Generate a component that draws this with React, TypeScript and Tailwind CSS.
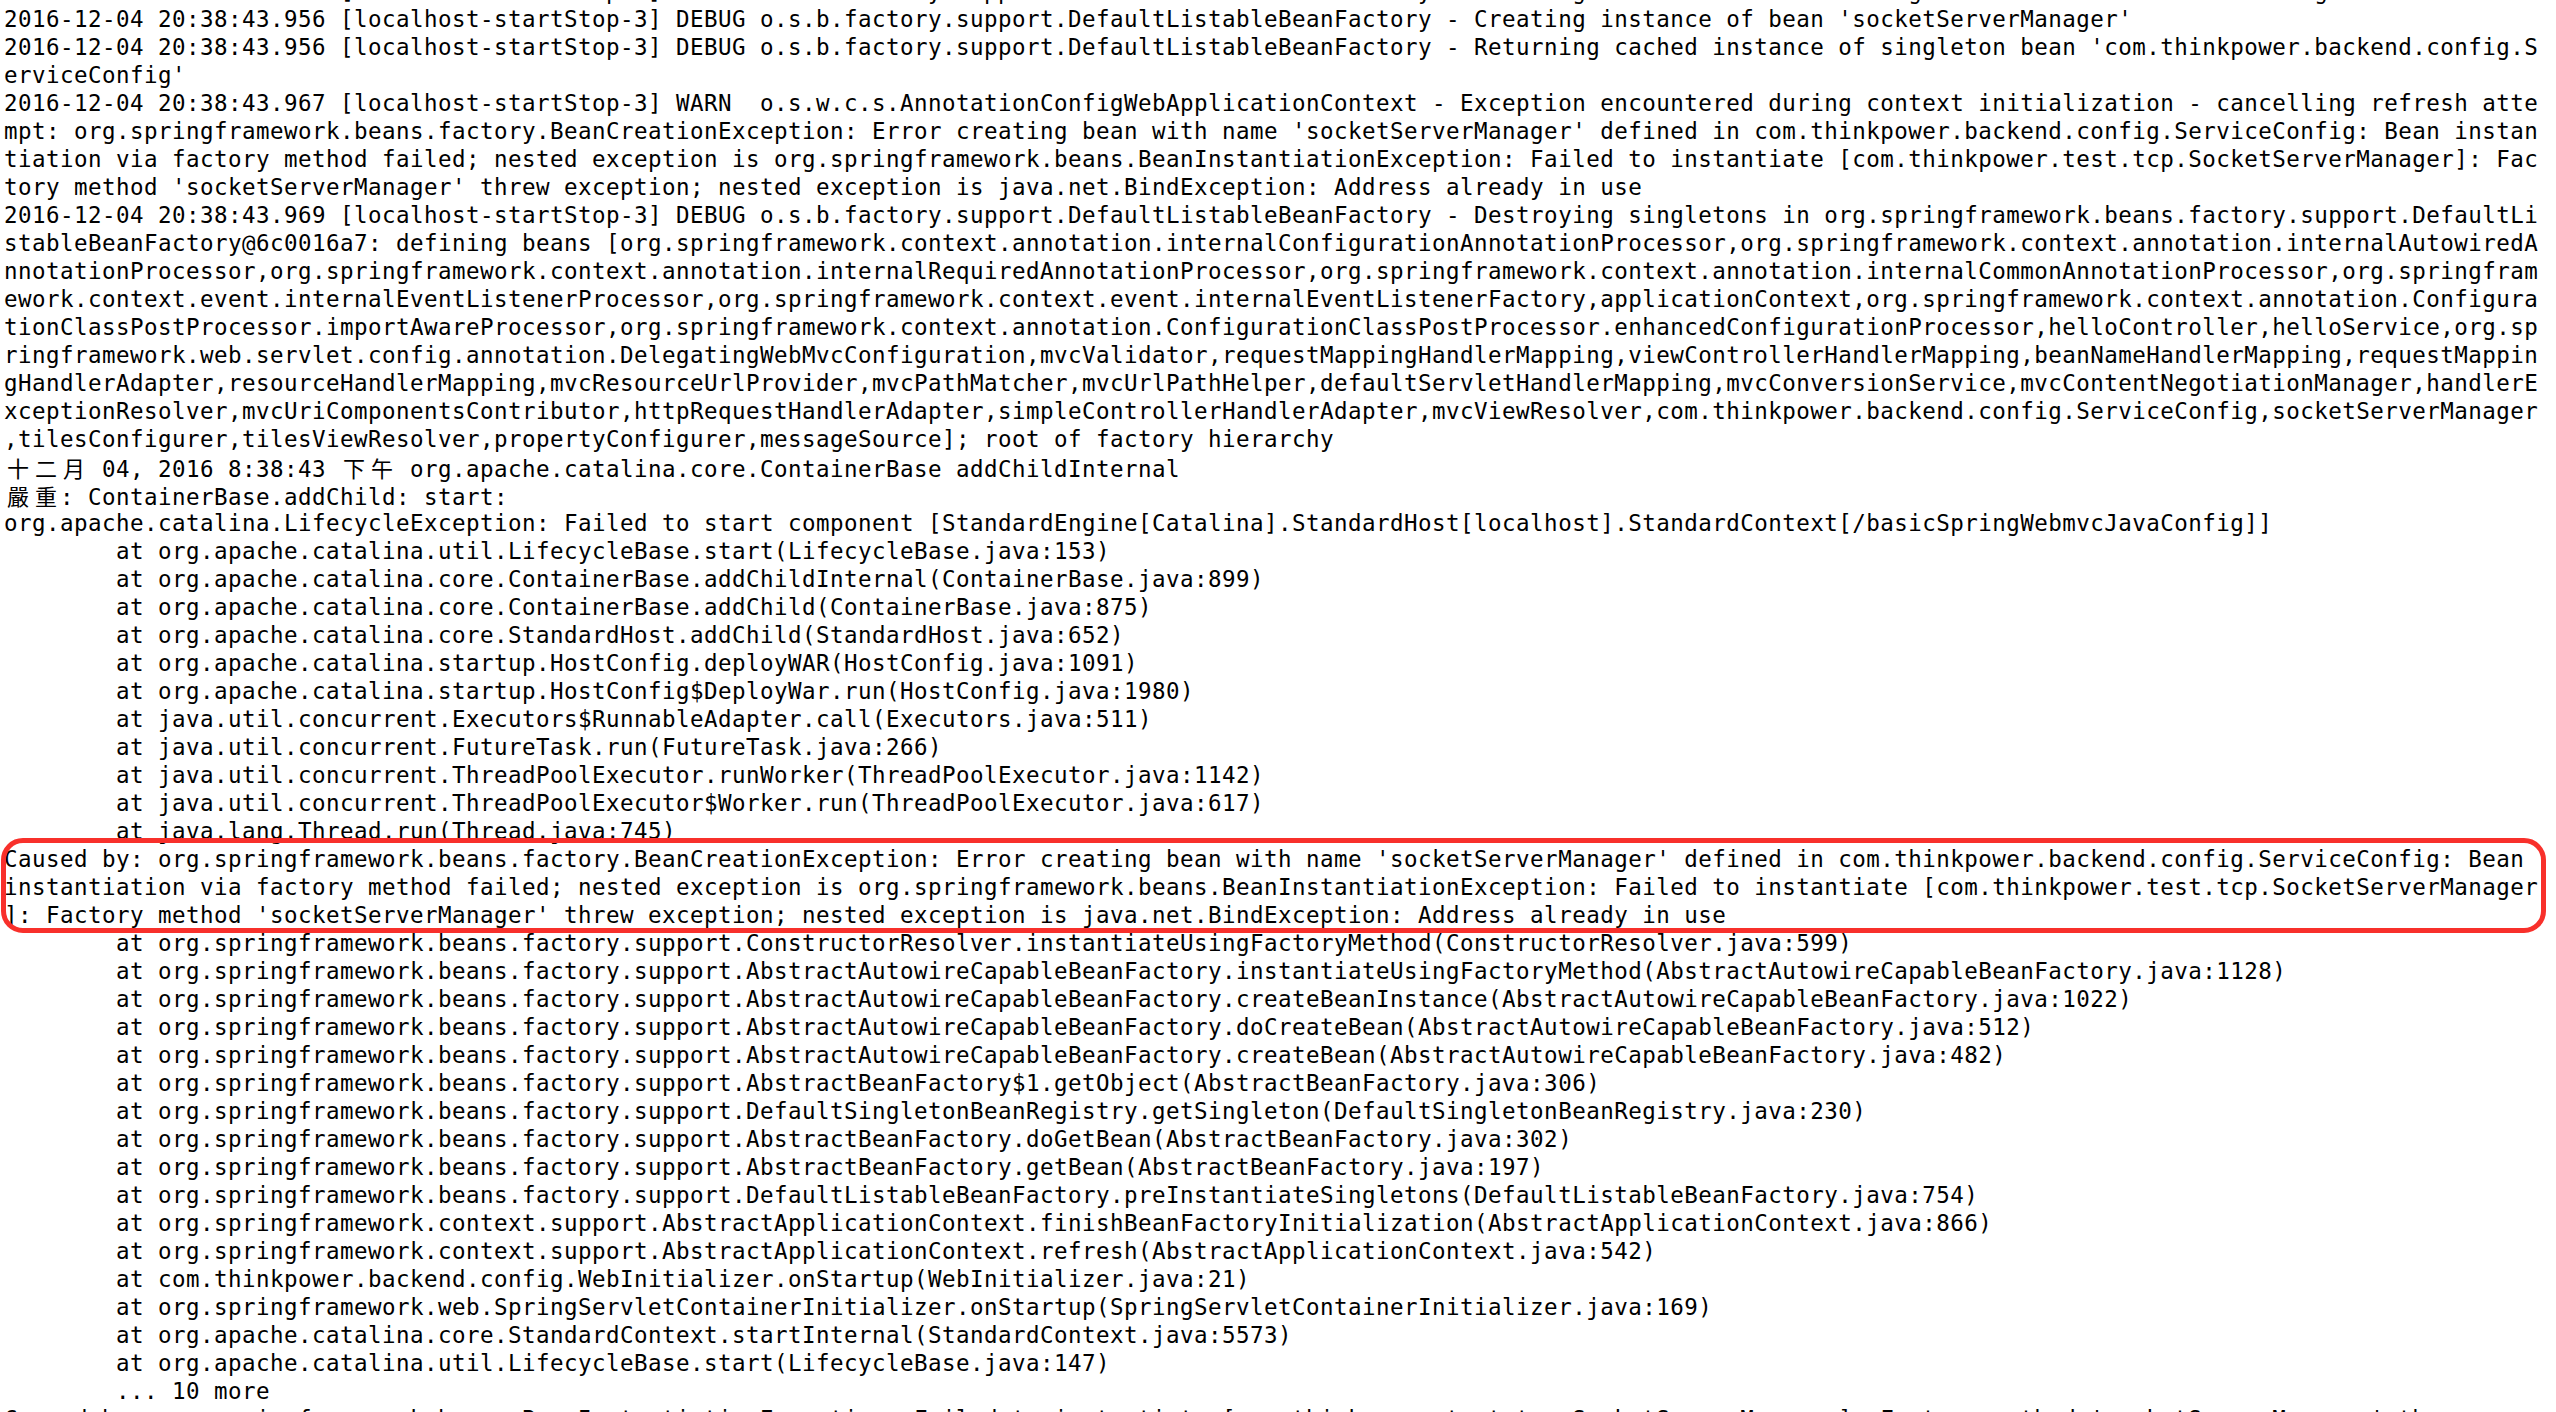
import React from "react";

const COLS = 181;

const T = "        ";

const raw: string[] = [
  "2016-12-04 20:38:43.956 [localhost-startStop-3] DEBUG o.s.b.factory.support.DefaultListableBeanFactory - Creating shared instance of singleton bean 'socketServerManager'",
  "2016-12-04 20:38:43.956 [localhost-startStop-3] DEBUG o.s.b.factory.support.DefaultListableBeanFactory - Creating instance of bean 'socketServerManager'",
  "2016-12-04 20:38:43.956 [localhost-startStop-3] DEBUG o.s.b.factory.support.DefaultListableBeanFactory - Returning cached instance of singleton bean 'com.thinkpower.backend.config.ServiceConfig'",
  "2016-12-04 20:38:43.967 [localhost-startStop-3] WARN  o.s.w.c.s.AnnotationConfigWebApplicationContext - Exception encountered during context initialization - cancelling refresh attempt: org.springframework.beans.factory.BeanCreationException: Error creating bean with name 'socketServerManager' defined in com.thinkpower.backend.config.ServiceConfig: Bean instantiation via factory method failed; nested exception is org.springframework.beans.BeanInstantiationException: Failed to instantiate [com.thinkpower.test.tcp.SocketServerManager]: Factory method 'socketServerManager' threw exception; nested exception is java.net.BindException: Address already in use",
  "2016-12-04 20:38:43.969 [localhost-startStop-3] DEBUG o.s.b.factory.support.DefaultListableBeanFactory - Destroying singletons in org.springframework.beans.factory.support.DefaultListableBeanFactory@6c0016a7: defining beans [org.springframework.context.annotation.internalConfigurationAnnotationProcessor,org.springframework.context.annotation.internalAutowiredAnnotationProcessor,org.springframework.context.annotation.internalRequiredAnnotationProcessor,org.springframework.context.annotation.internalCommonAnnotationProcessor,org.springframework.context.event.internalEventListenerProcessor,org.springframework.context.event.internalEventListenerFactory,applicationContext,org.springframework.context.annotation.ConfigurationClassPostProcessor.importAwareProcessor,org.springframework.context.annotation.ConfigurationClassPostProcessor.enhancedConfigurationProcessor,helloController,helloService,org.springframework.web.servlet.config.annotation.DelegatingWebMvcConfiguration,mvcValidator,requestMappingHandlerMapping,viewControllerHandlerMapping,beanNameHandlerMapping,requestMappingHandlerAdapter,resourceHandlerMapping,mvcResourceUrlProvider,mvcPathMatcher,mvcUrlPathHelper,defaultServletHandlerMapping,mvcConversionService,mvcContentNegotiationManager,handlerExceptionResolver,mvcUriComponentsContributor,httpRequestHandlerAdapter,simpleControllerHandlerAdapter,mvcViewResolver,com.thinkpower.backend.config.ServiceConfig,socketServerManager,tilesConfigurer,tilesViewResolver,propertyConfigurer,messageSource]; root of factory hierarchy",
  "十二月 04, 2016 8:38:43 下午 org.apache.catalina.core.ContainerBase addChildInternal",
  "嚴重: ContainerBase.addChild: start: ",
  "org.apache.catalina.LifecycleException: Failed to start component [StandardEngine[Catalina].StandardHost[localhost].StandardContext[/basicSpringWebmvcJavaConfig]]",
  T + "at org.apache.catalina.util.LifecycleBase.start(LifecycleBase.java:153)",
  T + "at org.apache.catalina.core.ContainerBase.addChildInternal(ContainerBase.java:899)",
  T + "at org.apache.catalina.core.ContainerBase.addChild(ContainerBase.java:875)",
  T + "at org.apache.catalina.core.StandardHost.addChild(StandardHost.java:652)",
  T + "at org.apache.catalina.startup.HostConfig.deployWAR(HostConfig.java:1091)",
  T + "at org.apache.catalina.startup.HostConfig$DeployWar.run(HostConfig.java:1980)",
  T + "at java.util.concurrent.Executors$RunnableAdapter.call(Executors.java:511)",
  T + "at java.util.concurrent.FutureTask.run(FutureTask.java:266)",
  T + "at java.util.concurrent.ThreadPoolExecutor.runWorker(ThreadPoolExecutor.java:1142)",
  T + "at java.util.concurrent.ThreadPoolExecutor$Worker.run(ThreadPoolExecutor.java:617)",
  T + "at java.lang.Thread.run(Thread.java:745)",
  "Caused by: org.springframework.beans.factory.BeanCreationException: Error creating bean with name 'socketServerManager' defined in com.thinkpower.backend.config.ServiceConfig: Bean instantiation via factory method failed; nested exception is org.springframework.beans.BeanInstantiationException: Failed to instantiate [com.thinkpower.test.tcp.SocketServerManager]: Factory method 'socketServerManager' threw exception; nested exception is java.net.BindException: Address already in use",
  T + "at org.springframework.beans.factory.support.ConstructorResolver.instantiateUsingFactoryMethod(ConstructorResolver.java:599)",
  T + "at org.springframework.beans.factory.support.AbstractAutowireCapableBeanFactory.instantiateUsingFactoryMethod(AbstractAutowireCapableBeanFactory.java:1128)",
  T + "at org.springframework.beans.factory.support.AbstractAutowireCapableBeanFactory.createBeanInstance(AbstractAutowireCapableBeanFactory.java:1022)",
  T + "at org.springframework.beans.factory.support.AbstractAutowireCapableBeanFactory.doCreateBean(AbstractAutowireCapableBeanFactory.java:512)",
  T + "at org.springframework.beans.factory.support.AbstractAutowireCapableBeanFactory.createBean(AbstractAutowireCapableBeanFactory.java:482)",
  T + "at org.springframework.beans.factory.support.AbstractBeanFactory$1.getObject(AbstractBeanFactory.java:306)",
  T + "at org.springframework.beans.factory.support.DefaultSingletonBeanRegistry.getSingleton(DefaultSingletonBeanRegistry.java:230)",
  T + "at org.springframework.beans.factory.support.AbstractBeanFactory.doGetBean(AbstractBeanFactory.java:302)",
  T + "at org.springframework.beans.factory.support.AbstractBeanFactory.getBean(AbstractBeanFactory.java:197)",
  T + "at org.springframework.beans.factory.support.DefaultListableBeanFactory.preInstantiateSingletons(DefaultListableBeanFactory.java:754)",
  T + "at org.springframework.context.support.AbstractApplicationContext.finishBeanFactoryInitialization(AbstractApplicationContext.java:866)",
  T + "at org.springframework.context.support.AbstractApplicationContext.refresh(AbstractApplicationContext.java:542)",
  T + "at com.thinkpower.backend.config.WebInitializer.onStartup(WebInitializer.java:21)",
  T + "at org.springframework.web.SpringServletContainerInitializer.onStartup(SpringServletContainerInitializer.java:169)",
  T + "at org.apache.catalina.core.StandardContext.startInternal(StandardContext.java:5573)",
  T + "at org.apache.catalina.util.LifecycleBase.start(LifecycleBase.java:147)",
  T + "... 10 more",
  "Caused by: org.springframework.beans.BeanInstantiationException: Failed to instantiate [com.thinkpower.test.tcp.SocketServerManager]: Factory method 'socketServerManager' threw exception; nested exception is java.net.BindException: Address already in use",
];

const isCJK = (ch: string) => /[\u3000-\u9fff\uff00-\uffef]/.test(ch);

function wrap(s: string): string[] {
  const out: string[] = [];
  let cur = "";
  let cols = 0;
  for (const ch of Array.from(s)) {
    const w = isCJK(ch) ? 2 : 1;
    if (cols + w > COLS) {
      out.push(cur);
      cur = "";
      cols = 0;
    }
    cur += ch;
    cols += w;
  }
  if (cur.length) out.push(cur);
  return out;
}

const rows: string[] = raw.flatMap(wrap);

function Row({ text }: { text: string }) {
  const parts: React.ReactNode[] = [];
  let buf = "";
  let k = 0;
  for (const ch of Array.from(text)) {
    if (isCJK(ch)) {
      if (buf) {
        parts.push(<span key={k++}>{buf}</span>);
        buf = "";
      }
      parts.push(
        <span
          key={k++}
          className="inline-block w-[28px] text-center tracking-normal font-['Noto_Sans_CJK_TC','Noto_Sans_CJK_SC',sans-serif] text-[22px]"
        >
          {ch}
        </span>
      );
    } else {
      buf += ch;
    }
  }
  if (buf) parts.push(<span key={k++}>{buf}</span>);
  return <div className="h-[28px] whitespace-pre">{parts}</div>;
}

export default function App() {
  return (
    <div className="relative w-[2556px] h-[1412px] overflow-hidden bg-white text-black">
      <div className="mt-[-23px] pl-[4px] font-['DejaVu_Sans_Mono','Liberation_Mono',monospace] text-[22.5px] leading-[28px] tracking-[0.455px]">
        {rows.map((r, i) => (
          <Row key={i} text={r} />
        ))}
      </div>
      <div className="absolute left-[1px] top-[838px] w-[2545px] h-[95px] rounded-[22px] border-[5px] border-[#f8302b] pointer-events-none" />
    </div>
  );
}
